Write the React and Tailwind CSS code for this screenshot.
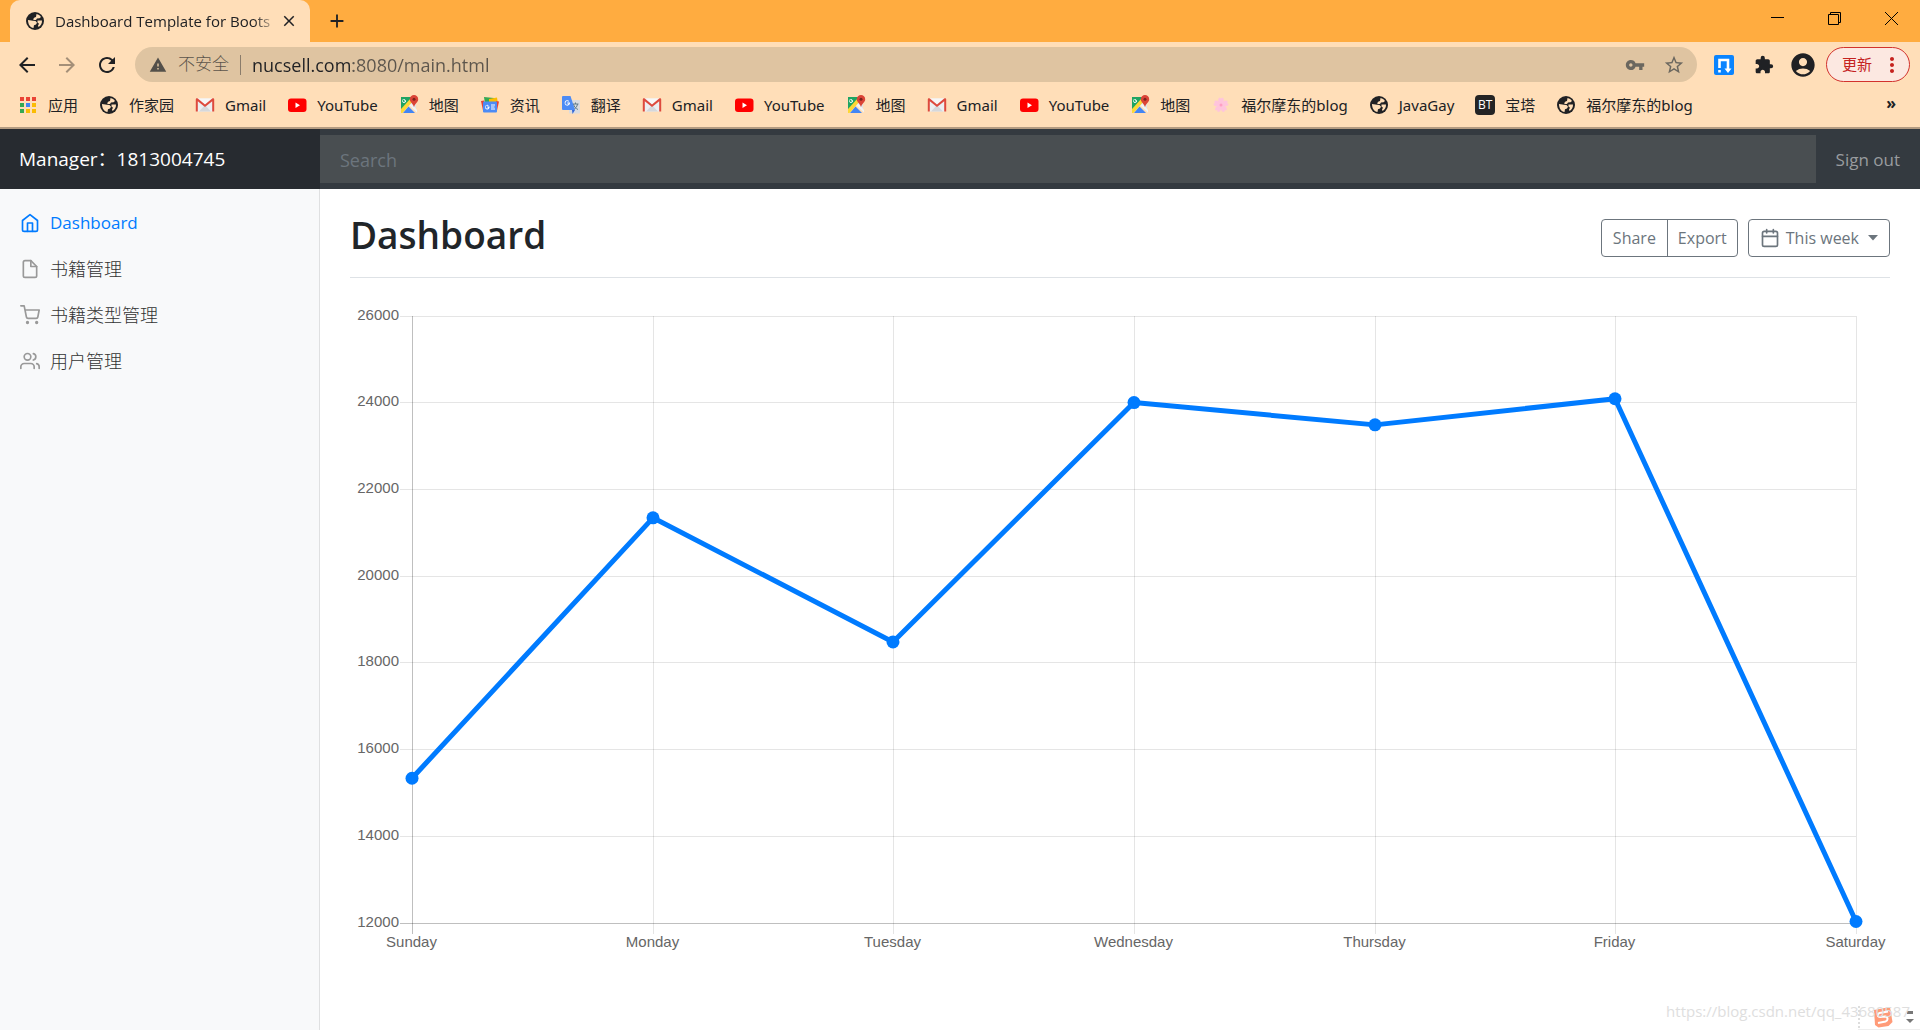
import {
  MdClose, MdAdd, MdArrowBack, MdArrowForward, MdRefresh, MdWarning,
  MdVpnKey, MdStarBorder, MdExtension, MdAccountCircle, MdMoreVert,
} from 'react-icons/md';
import { FiHome, FiFile, FiShoppingCart, FiUsers, FiCalendar } from 'react-icons/fi';

const APP_COLORS = ['#ea4335', '#ea4335', '#ea4335', '#34a853', '#4285f4', '#fbbc04', '#34a853', '#fbbc04', '#fbbc04'];

const AppsIcon = () => (
  <svg viewBox="0 0 20 20" className="size-5">
    {APP_COLORS.map((c, i) => (
      <rect key={i} x={2 + (i % 3) * 6} y={2 + Math.floor(i / 3) * 6} width="4" height="4" fill={c} />
    ))}
  </svg>
);

const GlobeIcon = () => (
  <svg viewBox="0 0 20 20" className="size-5">
    <circle cx="10" cy="10" r="9" fill="#202124" />
    <path d="M11.500 3c2 .4 3.500 1.500 4.500 3l-1.500 1.200-2.500.3-1 1.500h-2L8 8.200l1.500-1.700L11 6z" fill="#ffdeb8" />
    <path d="m3 9 5 .8 2.500.2 1.500 1.800-1 1.700-2 .8-.5 2.700C5.300 16.500 3 13.500 3 9z" fill="#ffdeb8" />
    <path d="M12.500 9.500h4.500c.2 3-1.500 5.500-3.500 6.500l-.5-1.500 1-1.800-1.500-1.200z" fill="#ffdeb8" />
  </svg>
);

const GmailIcon = () => (
  <svg viewBox="0 0 20 20" className="size-5">
    <path d="M2 3.500h16v13H2z" fill="#eceff1" />
    <path d="M4 16.500 10 10l6 6.500z" fill="#d5d8dc" />
    <path d="M3 3.500h14L10 9.500z" fill="#f7f7f7" />
    <path d="M.8 16.500V4.300c0-1.200 1.200-1.500 2-.8L10 9.600l7.200-6.100c.8-.7 2-.4 2 .8v12.200h-2V6.200L10 12 2.800 6.200v10.300z" fill="#de4a3d" />
  </svg>
);

const YouTubeIcon = () => (
  <svg viewBox="0 0 20 20" className="size-5">
    <rect x="1" y="3.500" width="18.500" height="13.500" rx="3" fill="#f00" />
    <path d="M8.500 7.500v5.500l4.500-2.750z" fill="#fff" />
  </svg>
);

const MapsIcon = () => (
  <svg viewBox="0 0 20 20" className="size-5">
    <path d="M2 2h12L2 16z" fill="#1fa463" />
    <path d="M14 2h3v14L10 9z" fill="#dfe3e6" />
    <path d="M2 14 12 3l2 3L3.500 18H2z" fill="#fdd835" />
    <path d="M4 18 9.500 11.500 16 18z" fill="#4285f4" />
    <path d="m10.500 10.500 2-2L18 15v2.500z" fill="#f1f3f4" />
    <path d="M7 5.300H5.200v.9h.8a1.200 1.200 0 1 1-.3-1.300l.6-.6a2 2 0 1 0 .7 1z" fill="#fff" />
    <path d="M15 0a4.200 4.200 0 0 0-4.200 4.200c0 3.300 3.600 4.300 4.200 8 .6-3.700 4.200-4.700 4.200-8A4.200 4.200 0 0 0 15 0z" fill="#db4437" />
    <circle cx="15" cy="4.200" r="1.500" fill="#7b231c" />
  </svg>
);

const NewsIcon = () => (
  <svg viewBox="0 0 20 20" className="size-5">
    <path d="m4 2 10 1v6H5z" fill="#34a853" />
    <path d="m9 4 8-1.500L18 9H9z" fill="#fbbc04" />
    <path d="m1 6 3-.5L5 16l-2-.5z" fill="#ea4335" />
    <path d="m16 6 3 .5-2 9z" fill="#ea4335" />
    <rect x="3" y="6.500" width="14" height="11" rx="1" fill="#4c8bf5" />
    <path d="M9.500 11.500H7.200v1h1.100a1.400 1.400 0 1 1-.3-1.500l.7-.7a2.300 2.300 0 1 0 .8 1.200zM11 9.500h4v1h-4zM11 11.500h3.500v1H11zM11 13.500h4v1h-4z" fill="#fff" />
  </svg>
);

const TranslateIcon = () => (
  <svg viewBox="0 0 20 20" className="size-5">
    <rect x="8" y="5" width="11" height="13.500" rx="1" fill="#dadce0" />
    <path d="M11.500 9h6M14.500 7.500V9M12.500 9c.5 3 2.500 4.500 4.500 5.500M16.500 9c-.5 3-2 4.500-4 5.500" stroke="#607d8b" fill="none" />
    <path d="m11 15 3 0-2.500 4z" fill="#3367d6" />
    <path d="M2 1h7.500l4.500 14H2a1 1 0 0 1-1-1V2a1 1 0 0 1 1-1z" fill="#4c8bf5" />
    <path d="M9 7.500H6.200v1.100h1.500a1.700 1.700 0 1 1-.4-1.900l.8-.8A2.700 2.700 0 1 0 9 7.500z" fill="#fff" />
  </svg>
);

const FlowerIcon = () => (
  <svg viewBox="0 0 20 20" className="size-5">
    {[0, 72, 144, 216, 288].map((a) => (
      <path key={a} d="M10 10C6.500 7 6.500 3.500 8.500 2.500l1.500 1 1.500-1c2 1 2 4.500-1.500 7.500z" fill="#ffc4dc" transform={`rotate(${a} 10 10)`} />
    ))}
    <circle cx="10" cy="10" r="1.500" fill="#ff9fc4" />
  </svg>
);

const BtIcon = () => (
  <span className="flex size-5 items-center justify-center rounded-sm bg-[#242424] font-['Open_Sans',sans-serif] text-xs text-white">BT</span>
);

const SavedIcon = () => (
  <svg viewBox="0 0 20 20" className="size-5">
    <rect width="20" height="20" rx="2" fill="#0a84ff" />
    <path d="M5.500 13V5H14v9" stroke="#fff" strokeWidth="2.600" fill="none" />
    <path d="M10.500 13.500h7L14 18zM4.200 15h2.600v2.500H4.200z" fill="#fff" />
  </svg>
);

const SogouIcon = () => (
  <svg viewBox="0 0 22 22" className="size-[22px]">
    <path d="m2 4 16-3 2.500 15-4 4-10 1.500L3 19z" fill="#ff9b78" />
    <path d="M16 5.500 7.500 7c-2.500.7-2 4 .5 4l5-.5c3 0 3.500 4 .5 5L6 17" stroke="#fff" strokeWidth="2" fill="none" />
  </svg>
);

const BOOKMARKS = [
  { label: '应用', Icon: AppsIcon },
  { label: '作家园', Icon: GlobeIcon },
  { label: 'Gmail', Icon: GmailIcon },
  { label: 'YouTube', Icon: YouTubeIcon },
  { label: '地图', Icon: MapsIcon },
  { label: '资讯', Icon: NewsIcon },
  { label: '翻译', Icon: TranslateIcon },
  { label: 'Gmail', Icon: GmailIcon },
  { label: 'YouTube', Icon: YouTubeIcon },
  { label: '地图', Icon: MapsIcon },
  { label: 'Gmail', Icon: GmailIcon },
  { label: 'YouTube', Icon: YouTubeIcon },
  { label: '地图', Icon: MapsIcon },
  { label: '福尔摩东的blog', Icon: FlowerIcon },
  { label: 'JavaGay', Icon: GlobeIcon },
  { label: '宝塔', Icon: BtIcon },
  { label: '福尔摩东的blog', Icon: GlobeIcon },
];

const NAV_ITEMS = [
  { label: 'Dashboard', Icon: FiHome, active: true },
  { label: '书籍管理', Icon: FiFile },
  { label: '书籍类型管理', Icon: FiShoppingCart },
  { label: '用户管理', Icon: FiUsers },
];

const DAYS = ['Sunday', 'Monday', 'Tuesday', 'Wednesday', 'Thursday', 'Friday', 'Saturday'];
const VALUES = [15339, 21345, 18483, 24003, 23489, 24092, 12034];
const TICKS = [26000, 24000, 22000, 20000, 18000, 16000, 14000, 12000];

// plot area inside the 1540x660 chart
const LEFT = 62, RIGHT = 1506, TOP = 17, BOTTOM = 624;
const xAt = (i) => Math.round(LEFT + (i * (RIGHT - LEFT)) / 6);
const yAt = (v) => BOTTOM - ((v - 12000) / 14000) * (BOTTOM - TOP);

function BrowserBar() {
  return (
    <div className="bg-[#ffdeb8] text-[#202124]">
      <div className="flex h-[42px] justify-between bg-[#ffac40]">
        <div className="flex items-center">
          <div className="ml-[10px] flex h-full w-[300px] items-center rounded-t-[10px] bg-[#ffdeb8] pr-3 pl-[15px]">
            <GlobeIcon />
            <span className="ml-[10px] flex-1 text-[15px] whitespace-nowrap [mask-image:linear-gradient(to_right,black_88%,transparent)]">
              Dashboard Template for Boots
            </span>
            <button aria-label="Close tab"><MdClose className="size-[18px]" /></button>
          </div>
          <button aria-label="New tab" className="ml-4"><MdAdd className="size-[22px]" /></button>
        </div>
        <div className="flex h-9 items-center gap-[44px] pr-[22px] text-black">
          <button aria-label="Minimize">
            <svg viewBox="0 0 13 13" className="size-[13px]"><path d="M0 5.500h13" stroke="currentColor" /></svg>
          </button>
          <button aria-label="Restore">
            <svg viewBox="0 0 13 13" className="size-[13px]" fill="none" stroke="currentColor"><path d="M.5 2.500h10v10H.5zM2.500 2.500v-2h10v10h-2" /></svg>
          </button>
          <button aria-label="Close">
            <svg viewBox="0 0 13 13" className="size-[13px]"><path d="m0 0 13 13M13 0 0 13" stroke="currentColor" /></svg>
          </button>
        </div>
      </div>

      <div className="flex h-[45px] items-center pr-[10px] pl-[15px]">
        <div className="flex items-center gap-4">
          <button aria-label="Back"><MdArrowBack className="size-6" /></button>
          <button aria-label="Forward"><MdArrowForward className="size-6 text-[#a48f78]" /></button>
          <button aria-label="Reload"><MdRefresh className="size-6" /></button>
        </div>
        <div className="ml-4 flex h-[35px] flex-1 items-center rounded-full bg-[#dfc4a1] pr-3 pl-[14px] text-lg">
          <MdWarning className="size-[18px] text-[#54504a]" />
          <span className="ml-[11px] text-[17px] font-light text-[#5c554c]">不安全</span>
          <span className="mx-[11px] h-5 w-px bg-[#8a7c6b]" />
          {/* host dark, port and path muted */}
          <input aria-label="Address" defaultValue="nucsell.com:8080/main.html"
            className="flex-1 bg-[linear-gradient(to_right,#202124_101px,#5c554c_101px)] bg-clip-text text-transparent outline-none" />
          <MdVpnKey className="size-5 text-[#6b675f]" />
          <MdStarBorder className="ml-[18px] size-[22px] text-[#6b675f]" />
        </div>
        <div className="ml-[17px] flex items-center">
          <SavedIcon />
          <MdExtension className="ml-5 size-5" />
          <MdAccountCircle className="ml-[15px] size-[28px]" />
          <button className="ml-[9px] flex h-[35px] w-[84px] items-center justify-between rounded-full border border-[#d2322d] bg-[#fce8e1] pr-[5px] pl-[15px] text-[15px] text-[#c5221f]">
            更新
            <MdMoreVert className="size-6" />
          </button>
        </div>
      </div>

      <div className="flex h-[42px] items-center border-b-2 border-[#b39b81] pr-6 pb-[4px] pl-[18px] font-['Noto_Sans','Noto_Sans_CJK_SC',sans-serif] text-[15px]">
        <div className="flex flex-1 items-center gap-[21px]">
          {BOOKMARKS.map(({ label, Icon }, i) => (
            <a key={i} href="#" className="flex items-center gap-[10px] whitespace-nowrap">
              <Icon />
              {label}
            </a>
          ))}
        </div>
        <button aria-label="More bookmarks" className="pb-1 text-base leading-none font-bold">»</button>
      </div>
    </div>
  );
}

function Chart() {
  return (
    <svg viewBox="0 0 1540 660" className="mt-[21px] w-full font-['Liberation_Sans',Arial,sans-serif] text-[15px]" role="img" aria-label="Orders per day">
      {TICKS.map((t) => {
        const y = Math.floor(yAt(t)) + 0.5;
        return (
          <g key={t}>
            <line x1={LEFT - 12} x2={RIGHT} y1={y} y2={y} stroke="#000" strokeOpacity={t === 12000 ? 0.25 : 0.1} />
            <text x={LEFT - 13} y={y + 3} textAnchor="end" fill="#666">{t}</text>
          </g>
        );
      })}
      {DAYS.map((day, i) => {
        const x = xAt(i) + 0.5;
        return (
          <g key={day}>
            <line x1={x} x2={x} y1={TOP} y2={BOTTOM + 11} stroke="#000" strokeOpacity={i === 0 ? 0.25 : 0.1} />
            <text x={x - 1} y={BOTTOM + 24} textAnchor="middle" fill="#666">{day}</text>
          </g>
        );
      })}
      <polyline points={VALUES.map((v, i) => `${xAt(i)},${yAt(v)}`).join(' ')} fill="none" stroke="#007bff" strokeWidth="5" strokeLinejoin="round" />
      {VALUES.map((v, i) => <circle key={i} cx={xAt(i)} cy={yAt(v)} r="6.500" fill="#007bff" />)}
    </svg>
  );
}

export default function App() {
  return (
    <div className="relative flex min-h-screen flex-col bg-white font-['Open_Sans','Noto_Sans_CJK_SC',sans-serif] text-[#212529]">
      <BrowserBar />

      <header className="flex h-[60px] items-center bg-[#343a40]">
        <a href="#" className="flex h-full w-[320px] items-center bg-[#272b30] pt-px pl-[19px] text-[19px] text-white">Manager：1813004745</a>
        <input type="text" placeholder="Search" aria-label="Search" className="h-12 flex-1 bg-[#494e51] px-5 pt-[2px] text-lg text-white outline-none placeholder:text-[#6c757d]" />
        <a href="#" className="px-5 pt-px text-[17px] text-[#999c9f]">Sign out</a>
      </header>

      <div className="flex flex-1">
        <nav className="w-[320px] border-r border-[#dfe0e1] bg-[#f8f9fa] pt-[11px]">
          <ul>
            {NAV_ITEMS.map(({ label, Icon, active }) => (
              <li key={label}>
                <a href="#" className={`flex h-[46px] items-center gap-[10px] pl-5 ${active ? 'text-[17px] font-medium text-[#007bff]' : 'text-lg font-light text-[#333]'}`}>
                  <Icon className={`size-5 ${active ? '' : 'text-[#999]'}`} />
                  {label}
                </a>
              </li>
            ))}
          </ul>
        </nav>

        <main className="flex-1 px-[30px]">
          <div className="flex h-[89px] items-center justify-between border-b border-[#dee2e6] pt-[10px]">
            <h1 className="pb-[6px] text-[37px] leading-[48px] font-semibold">Dashboard</h1>
            <div className="flex gap-[10px] text-base text-[#6c757d]">
              <div className="flex h-[38px] divide-x divide-[#6c757d] rounded border border-[#6c757d]">
                <button className="px-[11px]">Share</button>
                <button className="px-[10px]">Export</button>
              </div>
              <button className="flex h-[38px] items-center rounded border border-[#6c757d] px-[11px]">
                <FiCalendar className="size-5" />
                <span className="mx-[6px]">This week</span>
                <svg viewBox="0 0 10 6" className="ml-[3px] h-[6px] w-[10px]"><path d="M0 0h10L5 5.500z" fill="currentColor" /></svg>
              </button>
            </div>
          </div>
          <Chart />
        </main>
      </div>

      {/* input-method bar peeking in at the corner */}
      <div className="absolute right-0 bottom-0 flex h-[26px] items-center gap-3 border-b border-[#eee] pr-[6px]">
        <span className="h-[22px] border-l-2 border-dotted border-[#ddd]" />
        <SogouIcon />
        <svg viewBox="0 0 8 14" className="h-[14px] w-2"><path d="M1 1h6v3H1zM0 9h8l-4 4z" fill="#777" /></svg>
      </div>
      <span className="absolute right-[10px] bottom-2 text-[15px] text-[#dedede]">https://blog.csdn.net/qq_43680587</span>
    </div>
  );
}
